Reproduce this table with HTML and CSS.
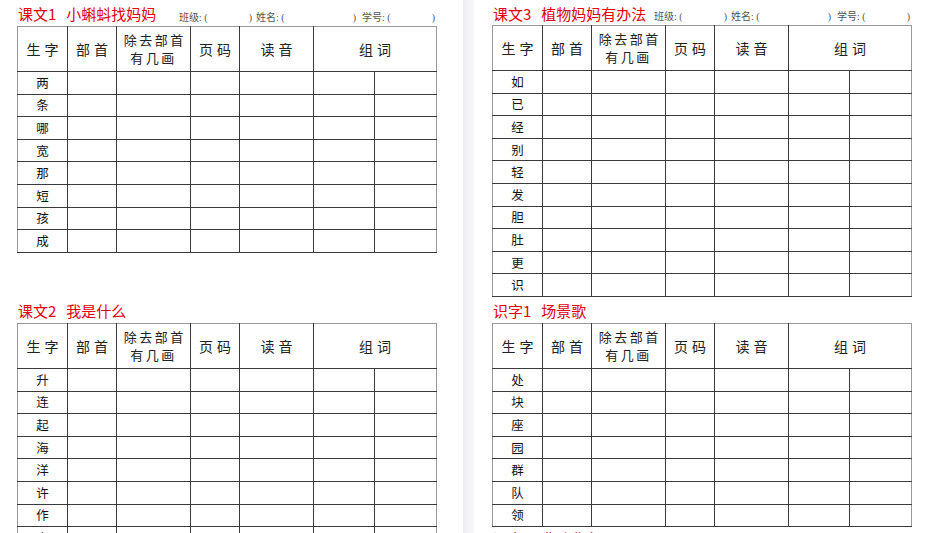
FILE: index.html
```html
<!DOCTYPE html>
<html lang="zh">
<head>
<meta charset="utf-8">
<title>生字表</title>
<link rel="stylesheet" href="styles.css">
</head>
<body>
<div class="page page-left">
  <section class="sec">
    <div class="title">
      <h2 class="name">课文1<span class="sp"></span>小蝌蚪找妈妈</h2>
      <div class="info">
        <span class="grp g1"><span>班级: (</span><span>)</span></span>
        <span class="grp g2"><span>姓名: (</span><span>)</span></span>
        <span class="grp g3"><span>学号: (</span><span>)</span></span>
      </div>
    </div>
    <table class="sheet">
      <colgroup><col class="c1"><col class="c2"><col class="c3"><col class="c4"><col class="c5"><col class="c6"><col class="c7"></colgroup>
      <thead><tr><th>生字</th><th>部首</th><th class="multi">除去部首<br>有几画</th><th>页码</th><th>读音</th><th colspan="2">组词</th></tr></thead>
      <tbody>
        <tr><td>两</td><td></td><td></td><td></td><td></td><td></td><td></td></tr>
        <tr><td>条</td><td></td><td></td><td></td><td></td><td></td><td></td></tr>
        <tr><td>哪</td><td></td><td></td><td></td><td></td><td></td><td></td></tr>
        <tr><td>宽</td><td></td><td></td><td></td><td></td><td></td><td></td></tr>
        <tr><td>那</td><td></td><td></td><td></td><td></td><td></td><td></td></tr>
        <tr><td>短</td><td></td><td></td><td></td><td></td><td></td><td></td></tr>
        <tr><td>孩</td><td></td><td></td><td></td><td></td><td></td><td></td></tr>
        <tr><td>成</td><td></td><td></td><td></td><td></td><td></td><td></td></tr>
      </tbody>
    </table>
  </section>
  <section class="sec">
    <div class="title">
      <h2 class="name">课文2<span class="sp"></span>我是什么</h2>
    </div>
    <table class="sheet">
      <colgroup><col class="c1"><col class="c2"><col class="c3"><col class="c4"><col class="c5"><col class="c6"><col class="c7"></colgroup>
      <thead><tr><th>生字</th><th>部首</th><th class="multi">除去部首<br>有几画</th><th>页码</th><th>读音</th><th colspan="2">组词</th></tr></thead>
      <tbody>
        <tr><td>升</td><td></td><td></td><td></td><td></td><td></td><td></td></tr>
        <tr><td>连</td><td></td><td></td><td></td><td></td><td></td><td></td></tr>
        <tr><td>起</td><td></td><td></td><td></td><td></td><td></td><td></td></tr>
        <tr><td>海</td><td></td><td></td><td></td><td></td><td></td><td></td></tr>
        <tr><td>洋</td><td></td><td></td><td></td><td></td><td></td><td></td></tr>
        <tr><td>许</td><td></td><td></td><td></td><td></td><td></td><td></td></tr>
        <tr><td>作</td><td></td><td></td><td></td><td></td><td></td><td></td></tr>
        <tr><td>变</td><td></td><td></td><td></td><td></td><td></td><td></td></tr>
      </tbody>
    </table>
  </section>
</div>
<div class="gutter"></div>
<div class="page page-right">
  <section class="sec">
    <div class="title">
      <h2 class="name">课文3<span class="sp"></span>植物妈妈有办法</h2>
      <div class="info">
        <span class="grp g1"><span>班级: (</span><span>)</span></span>
        <span class="grp g2"><span>姓名: (</span><span>)</span></span>
        <span class="grp g3"><span>学号: (</span><span>)</span></span>
      </div>
    </div>
    <table class="sheet">
      <colgroup><col class="c1"><col class="c2"><col class="c3"><col class="c4"><col class="c5"><col class="c6"><col class="c7"></colgroup>
      <thead><tr><th>生字</th><th>部首</th><th class="multi">除去部首<br>有几画</th><th>页码</th><th>读音</th><th colspan="2">组词</th></tr></thead>
      <tbody>
        <tr><td>如</td><td></td><td></td><td></td><td></td><td></td><td></td></tr>
        <tr><td>已</td><td></td><td></td><td></td><td></td><td></td><td></td></tr>
        <tr><td>经</td><td></td><td></td><td></td><td></td><td></td><td></td></tr>
        <tr><td>别</td><td></td><td></td><td></td><td></td><td></td><td></td></tr>
        <tr><td>轻</td><td></td><td></td><td></td><td></td><td></td><td></td></tr>
        <tr><td>发</td><td></td><td></td><td></td><td></td><td></td><td></td></tr>
        <tr><td>胆</td><td></td><td></td><td></td><td></td><td></td><td></td></tr>
        <tr><td>肚</td><td></td><td></td><td></td><td></td><td></td><td></td></tr>
        <tr><td>更</td><td></td><td></td><td></td><td></td><td></td><td></td></tr>
        <tr><td>识</td><td></td><td></td><td></td><td></td><td></td><td></td></tr>
      </tbody>
    </table>
  </section>
  <section class="sec">
    <div class="title">
      <h2 class="name">识字1<span class="sp"></span>场景歌</h2>
    </div>
    <table class="sheet">
      <colgroup><col class="c1"><col class="c2"><col class="c3"><col class="c4"><col class="c5"><col class="c6"><col class="c7"></colgroup>
      <thead><tr><th>生字</th><th>部首</th><th class="multi">除去部首<br>有几画</th><th>页码</th><th>读音</th><th colspan="2">组词</th></tr></thead>
      <tbody>
        <tr><td>处</td><td></td><td></td><td></td><td></td><td></td><td></td></tr>
        <tr><td>块</td><td></td><td></td><td></td><td></td><td></td><td></td></tr>
        <tr><td>座</td><td></td><td></td><td></td><td></td><td></td><td></td></tr>
        <tr><td>园</td><td></td><td></td><td></td><td></td><td></td><td></td></tr>
        <tr><td>群</td><td></td><td></td><td></td><td></td><td></td><td></td></tr>
        <tr><td>队</td><td></td><td></td><td></td><td></td><td></td><td></td></tr>
        <tr><td>领</td><td></td><td></td><td></td><td></td><td></td><td></td></tr>
      </tbody>
    </table>
    <div class="title title-next">
      <h2 class="name">课文4<span class="sp"></span>曹冲称象</h2>
    </div>
  </section>
</div>
</body>
</html>
```

FILE: styles.css
```css
html, body {
  margin: 0;
  padding: 0;
  background: #ffffff;
}
body {
  display: flex;
  height: 533px;
  overflow: hidden;
  font-family: "Noto Sans CJK SC", "Noto Sans", sans-serif;
  color: #111;
}
.page {
  display: grid;
  grid-template-rows: 297px auto;
  align-content: start;
  box-sizing: border-box;
  background: #fff;
}
.page-left {
  width: 463px;
  padding-left: 17px;
}
.page-right {
  flex: 1;
  padding-left: 18px;
}
.gutter {
  width: 11px;
  background: linear-gradient(to right, #eceef2, #f4f5f8 60%, #f6f7f9);
}
.sec {
  width: 420px;
  display: flex;
  flex-direction: column;
}
.title {
  height: 26px;
  box-sizing: border-box;
  padding-top: 4px;
  display: flex;
  align-items: flex-start;
  justify-content: space-between;
}
.title-next {
  height: 20px;
  padding-top: 2px;
}
.name {
  margin: 0 0 0 1px;
  font-size: 15px;
  line-height: 20px;
  font-weight: 400;
  color: #e3000f;
  white-space: nowrap;
}
.sp {
  display: inline-block;
  width: 10px;
}
.info {
  display: flex;
  align-self: flex-end;
  width: 256px;
  margin: 0 2px 1px 0;
  font-family: "Liberation Serif", "Noto Sans CJK SC", serif;
  font-size: 10px;
  line-height: 14px;
  color: #555;
  white-space: pre;
}
.grp {
  display: flex;
  justify-content: space-between;
}
.g1 { width: 73px; margin-right: 4px; }
.g2 { width: 100px; margin-right: 6px; }
.g3 { width: 73px; }

.sheet {
  border-collapse: collapse;
  table-layout: fixed;
  width: 420px;
  border: 1px solid #9a9a9a;
}
.c1 { width: 50px; }
.c2 { width: 49px; }
.c3 { width: 74px; }
.c4 { width: 49px; }
.c5 { width: 74px; }
.c6 { width: 61px; }
.c7 { width: 62px; }
.sheet th,
.sheet td {
  border: 1px solid #3a3a3a;
  padding: 0;
  text-align: center;
  vertical-align: middle;
}
.sheet th {
  height: 44px;
  font-size: 14px;
  font-weight: 400;
  letter-spacing: 4px;
  text-indent: 4px;
  line-height: 18px;
  color: #222;
}
.sheet th.multi {
  font-size: 13px;
  line-height: 18px;
  letter-spacing: 2.5px;
  text-indent: 2.5px;
}
.sheet tr:first-child th {
  border-top-color: #9a9a9a;
}
.sheet td {
  height: 21.6px;
  font-size: 12.5px;
  line-height: 14px;
  color: #111;
}
.sheet th:first-child,
.sheet td:first-child {
  border-left-color: #9a9a9a;
}
.sheet th:last-child,
.sheet td:last-child {
  border-right-color: #9a9a9a;
}
```
